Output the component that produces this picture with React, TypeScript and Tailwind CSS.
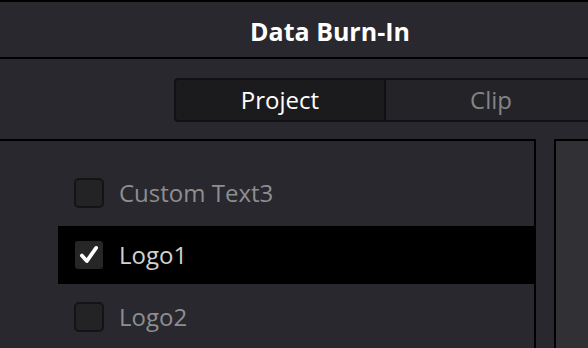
import React from "react";

type Item = { label: string; checked: boolean };

const items: Item[] = [
  { label: "Custom Text3", checked: false },
  { label: "Logo1", checked: true },
  { label: "Logo2", checked: false },
];

function Row({ item }: { item: Item }) {
  return (
    <div
      className={
        "flex items-center h-[58px] pl-[16px] " +
        (item.checked ? "bg-black" : "")
      }
    >
      {item.checked ? (
        <div className="w-[28px] h-[28px] ml-[1px] mr-[1px] rounded-[3px] bg-[#262626] flex items-center justify-center">
          <svg width="22" height="22" viewBox="0 0 20 20">
            <path
              d="M3.5 10.5 L8 15.5 L16.5 3.5"
              fill="none"
              stroke="white"
              strokeWidth="3.4"
              strokeLinecap="round"
              strokeLinejoin="round"
            />
          </svg>
        </div>
      ) : (
        <div className="w-[30px] h-[30px] rounded-[5px] bg-[#232326] border-2 border-[#141416]" />
      )}
      <span
        className={
          "ml-[15px] text-[24px] " +
          (item.checked ? "text-[#d2d2d2]" : "text-[#8e8e90]")
        }
      >
        {item.label}
      </span>
    </div>
  );
}

export default function App() {
  return (
    <div
      className="w-[588px] h-[348px] overflow-hidden bg-[#28282e] border-t-2 border-black flex flex-col"
      style={{ fontFamily: '"Open Sans", "Noto Sans", sans-serif' }}
    >
      {/* header */}
      <div className="h-[57px] shrink-0 border-b-2 border-black flex items-center">
        <div className="w-[660px] shrink-0 flex justify-center pt-[4px]">
          <span className="text-[25px] font-bold text-white">Data Burn-In</span>
        </div>
      </div>

      {/* tabs */}
      <div className="h-[80px] shrink-0 pt-[19px] pl-[174px] flex">
        <div className="flex h-[44px] shrink-0 border-2 border-[#111113] rounded-[4px] bg-[#111113] overflow-hidden">
          <div className="w-[208px] bg-[#1b1b1d] flex items-center justify-center text-[24px] text-white">
            Project
          </div>
          <div className="w-[210px] ml-[2px] bg-[#242428] flex items-center justify-center text-[24px] text-[#838387]">
            Clip
          </div>
        </div>
      </div>

      {/* panels */}
      <div className="flex flex-1 gap-[18px]">
        <div className="w-[536px] shrink-0 border-t-2 border-r-2 border-black pt-[23px] pl-[58px] flex flex-col gap-[4px]">
          {items.map((it) => (
            <Row key={it.label} item={it} />
          ))}
        </div>
        <div className="flex-1 border-t-2 border-l-2 border-black bg-[#303035]" />
      </div>
    </div>
  );
}
